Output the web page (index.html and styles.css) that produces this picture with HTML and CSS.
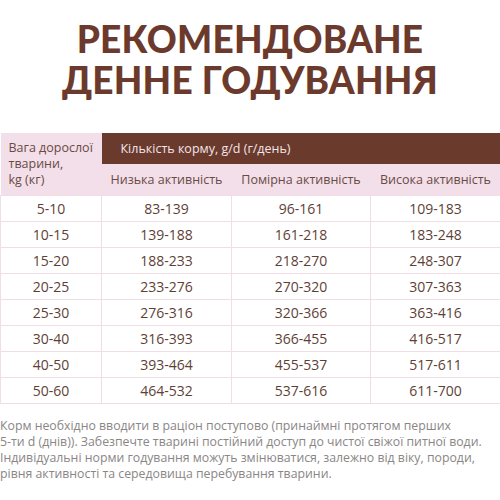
FILE: index.html
```html
<!DOCTYPE html>
<html lang="uk">
<head>
<meta charset="utf-8">
<link rel="stylesheet" href="styles.css">
</head>
<body>
<h1 class="title">РЕКОМЕНДОВАНЕ<br>ДЕННЕ ГОДУВАННЯ</h1>
<table class="feed">
  <colgroup>
    <col class="c1"><col class="c2"><col class="c3"><col class="c4">
  </colgroup>
  <thead>
    <tr>
      <th class="weight" rowspan="2">Вага дорослої тварини,<br>kg (кг)</th>
      <th class="amount" colspan="3">Кількість корму, g/d (г/день)</th>
    </tr>
    <tr class="sub">
      <th>Низька активність</th>
      <th>Помірна активність</th>
      <th>Висока активність</th>
    </tr>
  </thead>
  <tbody>
    <tr><td>5-10</td><td>83-139</td><td>96-161</td><td>109-183</td></tr>
    <tr><td>10-15</td><td>139-188</td><td>161-218</td><td>183-248</td></tr>
    <tr><td>15-20</td><td>188-233</td><td>218-270</td><td>248-307</td></tr>
    <tr><td>20-25</td><td>233-276</td><td>270-320</td><td>307-363</td></tr>
    <tr><td>25-30</td><td>276-316</td><td>320-366</td><td>363-416</td></tr>
    <tr><td>30-40</td><td>316-393</td><td>366-455</td><td>416-517</td></tr>
    <tr><td>40-50</td><td>393-464</td><td>455-537</td><td>517-611</td></tr>
    <tr><td>50-60</td><td>464-532</td><td>537-616</td><td>611-700</td></tr>
  </tbody>
</table>
<p class="note">Корм необхідно вводити в раціон поступово (принаймні протягом перших<br>5-ти d (днів)). Забезпечте тварині постійний доступ до чистої свіжої питної води.<br>Індивідуальні норми годування можуть змінюватися, залежно від віку, породи,<br>рівня активності та середовища перебування тварини.</p>
</body>
</html>
```
FILE: styles.css
```css
html, body {
  margin: 0;
  padding: 0;
  background: #ffffff;
}
body {
  width: 500px;
  font-family: "Open Sans", "Noto Sans", sans-serif;
}
.title {
  margin: 18px 0 0 0;
  text-align: center;
  font-family: "Lato", "Open Sans", sans-serif;
  font-weight: 900;
  font-size: 37px;
  line-height: 41px;
  letter-spacing: 0.2px;
  color: #6b3a2c;
}
.feed {
  margin-top: 33px;
  width: 500px;
  border-collapse: collapse;
  table-layout: fixed;
  font-size: 13px;
}
.c1 { width: 101px; }
.c2 { width: 130px; }
.c3 { width: 139px; }
.c4 { width: 130px; }
.feed th {
  font-weight: 400;
  padding: 0;
}
.weight {
  background: #f3dfe9;
  color: #6a4a45;
  text-align: left;
  vertical-align: top;
  padding: 7px 0 0 8px !important;
  line-height: 16px;
  font-size: 12.5px;
}
.amount {
  background: #6a3b2d;
  color: #f4e4ea;
  text-align: left;
  padding-left: 19px !important;
  height: 31px;
  font-size: 12.5px;
}
.sub th {
  background: #f3dfe9;
  color: #6a4a45;
  height: 31px;
  text-align: center;
  font-size: 12.5px;
}
.feed td {
  height: 25px;
  border: 1px solid #f1dde4;
  text-align: center;
  color: #5e3f37;
  font-size: 14px;
  padding: 0;
}
.note {
  margin: 14px 0 0 0;
  font-size: 12.3px;
  line-height: 16px;
  color: #8a8685;
}
```
